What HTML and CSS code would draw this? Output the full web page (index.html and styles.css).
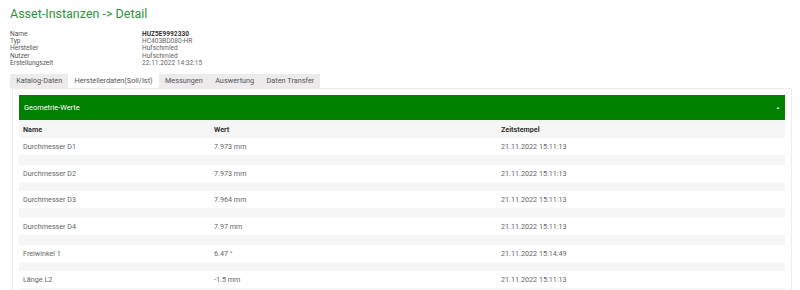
FILE: index.html
```html
<!DOCTYPE html>
<html lang="de">
  <head>
    <meta charset="UTF-8" />
    <title>Asset-Instanzen -> Detail</title>
    <link rel="stylesheet" href="styles.css">
  </head>
  <body>
    <h1 class="page_title">Asset-Instanzen -&gt; Detail</h1>

    <table class="info">
      <tr><td class="info_label">Name</td><td class="info_value strong">HUZ5E9992330</td></tr>
      <tr><td class="info_label">Typ</td><td class="info_value">HC403BD080-HR</td></tr>
      <tr><td class="info_label">Hersteller</td><td class="info_value">Hufschmied</td></tr>
      <tr><td class="info_label">Nutzer</td><td class="info_value">Hufschmied</td></tr>
      <tr><td class="info_label">Erstellungszeit</td><td class="info_value">22.11.2022 14:32:15</td></tr>
    </table>

    <div class="tabs">
      <div class="tab">Katalog-Daten</div>
      <div class="tab active">Herstellerdaten(Soll/Ist)</div>
      <div class="tab">Messungen</div>
      <div class="tab">Auswertung</div>
      <div class="tab">Daten Transfer</div>
    </div>

    <div class="tab_content">
      <div class="panel_head">
        <span>Geometrie-Werte</span>
        <span class="caret">&#9650;</span>
      </div>
      <table class="values">
        <colgroup>
          <col class="col_name" />
          <col class="col_value" />
          <col />
        </colgroup>
        <tr class="head">
          <th>Name</th>
          <th>Wert</th>
          <th>Zeitstempel</th>
        </tr>
        <tr class="row"><td>Durchmesser D1</td><td>7.973 mm</td><td>21.11.2022 15:11:13</td></tr>
        <tr class="gap"><td colspan="3"></td></tr>
        <tr class="row"><td>Durchmesser D2</td><td>7.973 mm</td><td>21.11.2022 15:11:13</td></tr>
        <tr class="gap"><td colspan="3"></td></tr>
        <tr class="row"><td>Durchmesser D3</td><td>7.964 mm</td><td>21.11.2022 15:11:13</td></tr>
        <tr class="gap"><td colspan="3"></td></tr>
        <tr class="row"><td>Durchmesser D4</td><td>7.97 mm</td><td>21.11.2022 15:11:13</td></tr>
        <tr class="gap"><td colspan="3"></td></tr>
        <tr class="row"><td>Freiwinkel 1</td><td>6.47 °</td><td>21.11.2022 15:14:49</td></tr>
        <tr class="gap"><td colspan="3"></td></tr>
        <tr class="row"><td>Länge L2</td><td>-1.5 mm</td><td>21.11.2022 15:11:13</td></tr>
        <tr class="gap"><td colspan="3"></td></tr>
      </table>
    </div>
  </body>
</html>
```

FILE: styles.css
```css
body {
  margin: 0;
  padding: 0 8px 0 10px;
  font-family: Roboto, "Liberation Sans", Arial, sans-serif;
  background: #ffffff;
  color: #555555;
}
.page_title {
  margin: 0;
  padding-top: 6px;
  height: 25px;
  font-size: 12.5px;
  font-weight: 400;
  color: #2f9140;
}
.info {
  border-collapse: collapse;
  font-size: 6.6px;
}
.info td {
  padding: 0;
  height: 7.2px;
  line-height: 7.2px;
}
.info_label {
  width: 132px;
  color: #555555;
}
.info_value {
  color: #666666;
}
.strong {
  font-weight: 700;
  color: #333333;
}
.tabs {
  display: flex;
  margin-top: 7px;
  height: 14px;
}
.tab {
  padding: 0 6.2px;
  font-size: 7.3px;
  line-height: 14px;
  color: #555555;
  background: #ebebeb;
}
.tab.active {
  background: #ffffff;
}
.tab_content {
  margin-left: 2px;
  border: 1px solid #eeeeee;
  border-bottom: none;
  padding: 5px 6px 0 6px;
}
.panel_head {
  display: flex;
  justify-content: space-between;
  align-items: center;
  height: 25px;
  margin-top: 1px;
  padding: 0 5px;
  background: #007f00;
  color: #ffffff;
  font-size: 7.4px;
}
.caret {
  font-size: 4px;
}
.values {
  width: 100%;
  border-collapse: collapse;
  table-layout: fixed;
  font-size: 7.2px;
}
.col_name {
  width: 191px;
}
.col_value {
  width: 287px;
}
.values th,
.values td {
  padding: 0 4px;
  text-align: left;
}
.values th {
  height: 18px;
  font-weight: 700;
  color: #333333;
}
.head {
  background: #f5f5f5;
}
.row td {
  height: 17px;
  color: #666666;
  background: #ffffff;
}
.gap td {
  height: 9.7px;
  padding: 0;
  background: #f6f6f6;
}
```
